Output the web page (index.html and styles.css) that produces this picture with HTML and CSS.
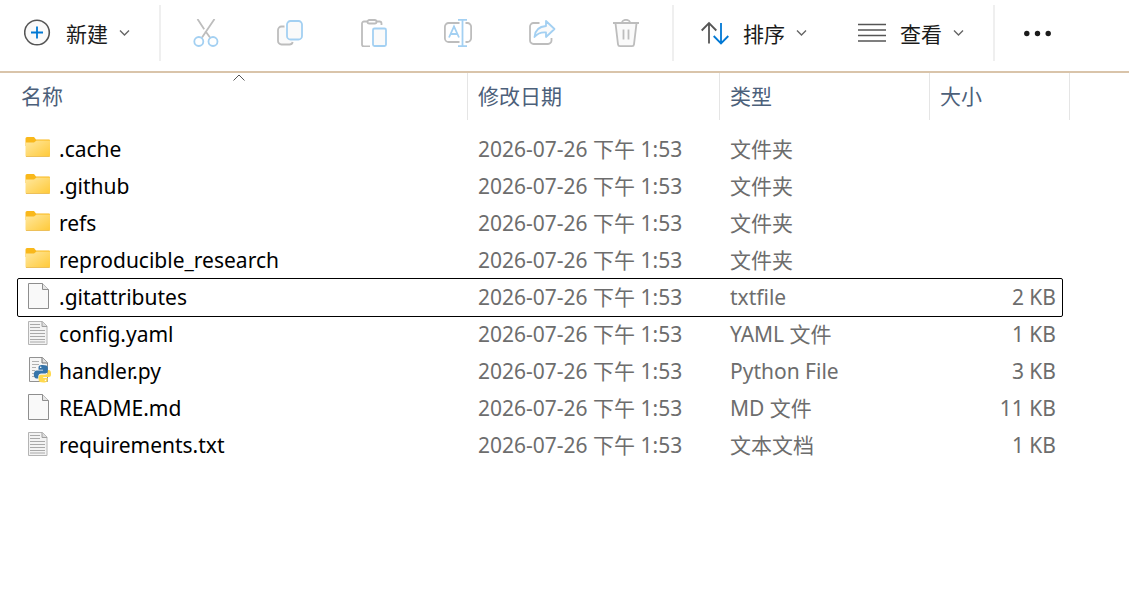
FILE: index.html
```html
<!DOCTYPE html>
<html lang="zh-CN">
<head>
  <meta charset="UTF-8" />
  <meta name="viewport" content="width=device-width, initial-scale=1" />
  <title>文件资源管理器</title>
  <link rel="stylesheet" href="styles.css">
</head>
<body>
  <!-- Shared icons -->
  <svg class="sprite" aria-hidden="true">
    <defs>
      <linearGradient id="folderFill" x1="0" y1="0" x2="1" y2="1">
        <stop offset="0" stop-color="#ffe8a0" />
        <stop offset="1" stop-color="#ffc937" />
      </linearGradient>
      <symbol id="chevron" viewBox="0 0 11 8">
        <path d="M1 1.5l4.500 4.500L10 1.5" fill="none" stroke="#666" stroke-width="1.400" />
      </symbol>
      <symbol id="folder" viewBox="0 0 26 28">
        <path d="M.5 4.500A1.500 1.500 0 0 1 2 3h7l2 2.500h13a1 1 0 0 1 1 1V12H.5z" fill="#f9b81b" />
        <path d="M.5 8.500H9l2.500-2H25v15a1.500 1.500 0 0 1-1.500 1.500H2a1.500 1.500 0 0 1-1.500-1.500z" fill="url(#folderFill)" />
        <path d="M1 22.500h23.500" stroke="#edc05a" />
      </symbol>
      <symbol id="page" viewBox="0 0 26 28">
        <path d="M3.500 1.500h14l6 6v19h-20z" fill="#f9f9f9" stroke="#8e8e8e" />
        <path d="M17.500 1.500v6h6" fill="#e6e6e6" stroke="#8e8e8e" />
      </symbol>
      <symbol id="textpage" viewBox="0 0 26 28">
        <path d="M3.500 2.500h14l4.500 4.500v18.500H3.500z" fill="#f3f3f3" stroke="#b4b4b4" />
        <path d="M17 2.500v5h5" fill="#ddd" stroke="#a0a0a0" />
        <path d="M5 5.500h10M5 8.500h10M5 11.500h15M5 14.500h15M5 17.500h15M5 20.500h15M5 23h15" stroke="#a9a9a9" />
      </symbol>
      <symbol id="python" viewBox="0 0 26 28">
        <path d="M4.500 1.500h13l5 5v19h-18z" fill="#f6f6f6" stroke="#929292" />
        <path d="M17 1.500v5.500h5.500" fill="#e0e0e0" stroke="#777" />
        <path d="M7 5.500h7M7 8.500h7M7 11.500h4M7 14.500h3M7 17.500h3M7 20.500h3" stroke="#b0b0b0" />
        <path d="M17.500 9c-3.500 0-4 1.300-4 2.800v2h4.500v.8h-6.300c-2 0-2.900 1.800-2.900 4s1 4 2.700 4h1.800v-2.300c0-1.700 1.300-2.900 3-2.900h4.200c1.400 0 2.300-1 2.300-2.300v-3.300C22.800 9.700 21 9 17.500 9z" fill="#3674a9" />
        <path d="M18.500 26.500c3.500 0 4.200-1.200 4.200-2.700v-1.900h-4.500v-.8h5.700c2 0 2.300-1.700 2.100-3.900-.2-2-1-3.200-2.200-3.200h-.9v1.700c0 1.700-1.200 3-3 3h-4c-1.400 0-2.300 1-2.300 2.400v2.900c0 1.700 1.800 2.500 4.900 2.500z" fill="#ffd94f" />
        <circle cx="15.700" cy="11.300" r=".8" fill="#fff" />
        <circle cx="20.400" cy="24.200" r=".8" fill="#fff" />
      </symbol>
    </defs>
  </svg>

  <header class="toolbar">
    <button class="menu-btn" type="button">
      <svg class="tool-icon" viewBox="0 0 28 28" fill="none">
        <circle cx="13" cy="13.500" r="12.300" stroke="#555" stroke-width="1.600" fill="#fafafa" />
        <path d="M13 7.500v12M7 13.500h12" stroke="#0078d4" stroke-width="1.800" />
      </svg>
      <span>新建</span>
      <svg class="chevron"><use href="#chevron" /></svg>
    </button>
    <div class="separator"></div>

    <button class="icon-btn" type="button" aria-label="剪切" disabled>
      <svg class="tool-icon" viewBox="0 0 28 28" fill="none" stroke-width="1.800">
        <path d="M5.500 0l6.700 10.300M13.300 12l4.700 6.500M22.500 0L10 18.500" stroke="#bdbdbd" />
        <circle cx="6.800" cy="22.500" r="4.500" stroke="#a3d0f2" />
        <circle cx="21" cy="22.500" r="4.500" stroke="#a3d0f2" />
      </svg>
    </button>
    <button class="icon-btn" type="button" aria-label="复制" disabled>
      <svg class="tool-icon" viewBox="0 0 28 28" fill="none" stroke-width="1.800">
        <path d="M8.500 7.500H5.500a3.500 3.500 0 0 0-3.500 3.500v11a3.500 3.500 0 0 0 3.500 3.500h8c1.800 0 2.800-.8 3.200-2.500" fill="#fafafa" stroke="#bdbdbd" />
        <rect x="11" y="2" width="15" height="18.500" rx="3.500" fill="#fafafa" stroke="#a3d0f2" />
      </svg>
    </button>
    <button class="icon-btn" type="button" aria-label="粘贴" disabled>
      <svg class="tool-icon" viewBox="0 0 28 28" fill="none" stroke-width="1.800">
        <path d="M7 2.500H4a2 2 0 0 0-2 2v21a2 2 0 0 0 2 2h6M16.500 2.500h3a2 2 0 0 1 2 2V6" stroke="#bdbdbd" />
        <rect x="7.500" y="1" width="9" height="3.500" rx="1.750" stroke="#bdbdbd" />
        <rect x="13" y="9.500" width="13" height="17.500" rx="1.500" fill="#fafafa" stroke="#a3d0f2" />
      </svg>
    </button>
    <button class="icon-btn" type="button" aria-label="重命名" disabled>
      <svg class="tool-icon" viewBox="0 0 28 28" fill="none" stroke-width="1.800">
        <path d="M15.500 4H4.700A3.800 3.800 0 0 0 .9 7.800v11.400A3.800 3.800 0 0 0 4.700 23h10.800M21.500 4h1.800a3.800 3.800 0 0 1 3.800 3.800v11.400a3.800 3.800 0 0 1-3.800 3.800h-1.800" stroke="#bdbdbd" />
        <path d="M5 18.500L10 7.500l5 11M6.800 15h6.500M18.500 1v26M14 .9h9M14 27.100h9" stroke="#a3d0f2" />
      </svg>
    </button>
    <button class="icon-btn" type="button" aria-label="共享" disabled>
      <svg class="tool-icon" viewBox="0 0 28 28" fill="none" stroke-width="1.800">
        <path d="M11.500 4H5.500A3.500 3.500 0 0 0 2 7.500v14A3.500 3.500 0 0 0 5.500 25h14.500a3.500 3.500 0 0 0 3.500-3.500V19" stroke="#bdbdbd" />
        <path d="M18 2l8.500 8L18 18v-4.500c-5-.5-8.500 1-11.500 4.500.5-6.500 4.500-10.500 11.500-11z" fill="#fafafa" stroke="#a3d0f2" stroke-linejoin="round" />
      </svg>
    </button>
    <button class="icon-btn" type="button" aria-label="删除" disabled>
      <svg class="tool-icon" viewBox="0 0 28 28" fill="none" stroke="#bdbdbd" stroke-width="1.800">
        <path d="M3.500 4.300L6 25.300a2 2 0 0 0 2 1.800h12a2 2 0 0 0 2-1.800L24.500 4.300" fill="#fafafa" />
        <path d="M1 4h26M10 4a4 3.200 0 0 1 8 0M11.500 10.500v10M16.500 10.500v10" />
      </svg>
    </button>
    <div class="separator"></div>

    <div class="menu-group">
      <button class="menu-btn" type="button">
        <svg class="tool-icon" viewBox="0 0 28 28" fill="none" stroke-width="1.800">
          <path d="M8 24.500V4M.7 11.500L8 4l7.300 7.500" stroke="#555" />
          <path d="M20 4v20.500M12.700 17l7.300 7.500 7.300-7.500" stroke="#0078d4" />
        </svg>
        <span>排序</span>
        <svg class="chevron"><use href="#chevron" /></svg>
      </button>
      <button class="menu-btn" type="button">
        <svg class="tool-icon" viewBox="0 0 28 28" stroke="#555" stroke-width="1.600">
          <path d="M0 5.500h28M0 11h28M0 16.500h28M0 22h28" />
        </svg>
        <span>查看</span>
        <svg class="chevron"><use href="#chevron" /></svg>
      </button>
    </div>
    <div class="separator"></div>

    <button class="icon-btn more-btn" type="button" aria-label="查看更多">
      <svg class="tool-icon" viewBox="0 0 28 28" fill="#1b1b1b">
        <circle cx="2.800" cy="14.500" r="2.700" />
        <circle cx="13.500" cy="14.500" r="2.700" />
        <circle cx="24.200" cy="14.500" r="2.700" />
      </svg>
    </button>
  </header>

  <main>
    <table class="files">
      <thead>
        <tr>
          <th scope="col" aria-sort="ascending">名称
            <svg class="sort-mark" viewBox="0 0 12 7"><path d="M.5 6.500L6 1l5.500 5.500" fill="none" stroke="#555" /></svg>
          </th>
          <th scope="col">修改日期</th>
          <th scope="col">类型</th>
          <th scope="col">大小</th>
        </tr>
      </thead>
      <tbody>
        <tr>
          <td class="name"><svg class="file-icon"><use href="#folder" /></svg>.cache</td>
          <td>2026-07-26 下午 1:53</td>
          <td>文件夹</td>
          <td class="size"></td>
        </tr>
        <tr>
          <td class="name"><svg class="file-icon"><use href="#folder" /></svg>.github</td>
          <td>2026-07-26 下午 1:53</td>
          <td>文件夹</td>
          <td class="size"></td>
        </tr>
        <tr>
          <td class="name"><svg class="file-icon"><use href="#folder" /></svg>refs</td>
          <td>2026-07-26 下午 1:53</td>
          <td>文件夹</td>
          <td class="size"></td>
        </tr>
        <tr>
          <td class="name"><svg class="file-icon"><use href="#folder" /></svg>reproducible_research</td>
          <td>2026-07-26 下午 1:53</td>
          <td>文件夹</td>
          <td class="size"></td>
        </tr>
        <tr class="focused">
          <td class="name"><svg class="file-icon"><use href="#page" /></svg>.gitattributes</td>
          <td>2026-07-26 下午 1:53</td>
          <td>txtfile</td>
          <td class="size">2 KB</td>
        </tr>
        <tr>
          <td class="name"><svg class="file-icon"><use href="#textpage" /></svg>config.yaml</td>
          <td>2026-07-26 下午 1:53</td>
          <td>YAML 文件</td>
          <td class="size">1 KB</td>
        </tr>
        <tr>
          <td class="name"><svg class="file-icon"><use href="#python" /></svg>handler.py</td>
          <td>2026-07-26 下午 1:53</td>
          <td>Python File</td>
          <td class="size">3 KB</td>
        </tr>
        <tr>
          <td class="name"><svg class="file-icon"><use href="#page" /></svg>README.md</td>
          <td>2026-07-26 下午 1:53</td>
          <td>MD 文件</td>
          <td class="size">11 KB</td>
        </tr>
        <tr>
          <td class="name"><svg class="file-icon"><use href="#textpage" /></svg>requirements.txt</td>
          <td>2026-07-26 下午 1:53</td>
          <td>文本文档</td>
          <td class="size">1 KB</td>
        </tr>
      </tbody>
    </table>
  </main>
</body>
</html>
```
FILE: styles.css
```css
/* Layout & Reset */
* {
  box-sizing: border-box;
  margin: 0;
  padding: 0;
}
body {
  font-family: "Noto Sans", "Noto Sans CJK SC", sans-serif;
  font-size: 21px;
  background: #fff;
  color: #000;
}
.sprite {
  position: absolute;
  width: 0;
  height: 0;
}

/* Toolbar */
.toolbar {
  display: flex;
  align-items: stretch;
  padding: 5px 0 10px;
  border-bottom: 2px solid #d9c4aa;
}
.toolbar button {
  border: none;
  background: none;
  font: inherit;
  color: #1b1b1b;
}
.menu-group {
  display: flex;
  gap: 2px;
}
.menu-btn {
  display: flex;
  align-items: center;
  padding: 0 25px 0 24px;
  white-space: nowrap;
}
.menu-btn span {
  margin: 0 11px 0 14px;
}
.icon-btn {
  display: flex;
  align-items: center;
  justify-content: center;
  width: 84px;
  height: 56px;
}
.more-btn {
  width: 80px;
}
.separator {
  width: 2px;
  margin: 0 3px 0 4px;
  background: #efefef;
}
.tool-icon {
  flex: none;
  width: 28px;
  height: 28px;
}
.chevron {
  flex: none;
  width: 11px;
  height: 8px;
}

/* File list */
main {
  padding: 0 59px 0 11px;
}
.files {
  display: block;
}
.files thead,
.files tbody {
  display: block;
}
.files tr {
  display: grid;
  grid-template-columns: 1fr 252px 210px 140px;
}
.files th {
  position: relative;
  height: 47px;
  padding-left: 10px;
  border-right: 1px solid #e5e5e5;
  font-weight: normal;
  line-height: 47px;
  text-align: left;
  color: #4c607a;
}
.sort-mark {
  position: absolute;
  top: 1px;
  left: 50%;
  width: 12px;
  height: 7px;
  transform: translateX(-50%);
}
.files tbody {
  margin: 11px 8px 0 7px;
}
.files tbody tr {
  grid-template-columns: 1fr 252px 210px 132px;
}
.files td {
  height: 37px;
  padding-left: 10px;
  line-height: 37px;
  white-space: nowrap;
  color: #6d6d6d;
}
.files .name {
  display: flex;
  align-items: center;
  gap: 8px;
  padding-left: 7px;
  color: #000;
}
.files .size {
  padding-right: 6px;
  text-align: right;
}
.focused {
  outline: 1px solid #000;
  border-radius: 1px;
}
.file-icon {
  flex: none;
  width: 26px;
  height: 28px;
  margin-bottom: 4px;
}
```
